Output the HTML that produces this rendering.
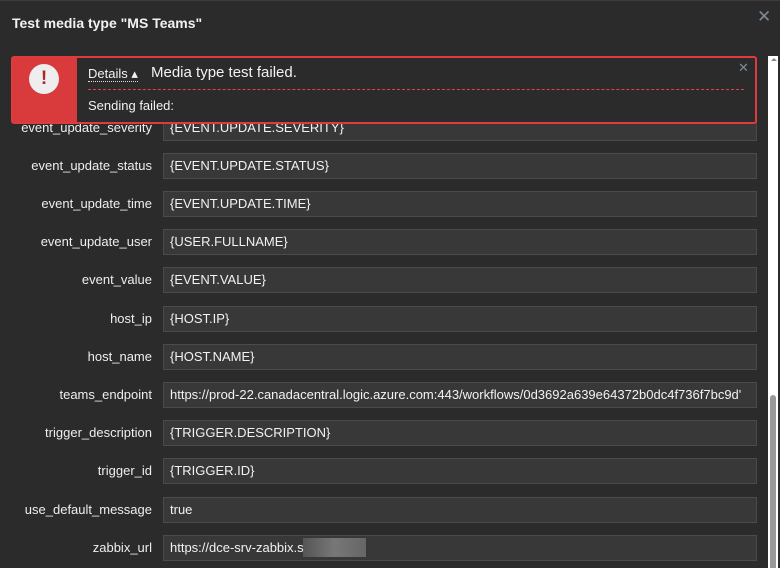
<!DOCTYPE html>
<html><head><style>
body{margin:0;width:780px;height:568px;background:#2b2b2b;font-family:"Liberation Sans",sans-serif;overflow:hidden;position:relative;color:#f2f2f2}
.t{position:absolute;left:12px;top:15px;font-size:14px;font-weight:bold;color:#f2f2f2}
.x{position:absolute;left:757px;top:7px;color:#7f8a94;font-size:17px}
.err{position:absolute;left:11px;top:56px;width:742px;height:64px;border:2px solid #e0393e;border-radius:3px;background:#2b2b2b}
.red{position:absolute;left:0;top:0;width:64px;height:64px;background:#d93a3c}
.circ{position:absolute;width:30px;height:30px;border-radius:50%;background:#eee;color:#b0242a;font-weight:bold;font-size:19px;text-align:center;line-height:30px}
.lbl{position:absolute;right:628px;font-size:13px;color:#eee;text-align:right;white-space:nowrap}
.in{position:absolute;left:163px;width:586px;height:24px;border:1px solid #4b4b4b;background:#383838;font-size:13px;line-height:24px;padding-left:6px;box-sizing:content-box;white-space:nowrap;overflow:hidden;color:#f2f2f2}
</style></head><body>
<div style="position:absolute;left:0;top:0;width:780px;height:1px;background:#3c3c3c"></div>
<div class="t">Test media type "MS Teams"</div>
<div class="x">✕</div>
<div style="position:absolute;left:768px;top:56px;width:10px;height:512px;background:#fff"></div>
<div style="position:absolute;left:770px;top:395px;width:6px;height:173px;background:#999;border-radius:3px 3px 0 0"></div>
<div style="position:absolute;left:771px;top:58px;width:0;height:0;border-left:3px solid transparent;border-right:3px solid transparent;border-bottom:3px solid #888"></div>
<div id="rows"></div>
<div class="err">
<div class="red"><div class="circ" style="left:16px;top:6px">!</div></div>
<div style="position:absolute;left:75px;top:8px;font-size:13px;border-bottom:1px dotted #ddd;line-height:15px">Details ▴</div>
<div style="position:absolute;left:138px;top:6px;font-size:15px">Media type test failed.</div>
<div style="position:absolute;left:75px;top:31px;width:656px;border-top:1px dashed #d9434a"></div>
<div style="position:absolute;left:75px;top:40px;font-size:13px">Sending failed:</div>
<div style="position:absolute;left:725px;top:2px;color:#7f8a94;font-size:13px">✕</div>
</div>
<script>
var r=[["event_update_severity","{EVENT.UPDATE.SEVERITY}"],["event_update_status","{EVENT.UPDATE.STATUS}"],["event_update_time","{EVENT.UPDATE.TIME}"],["event_update_user","{USER.FULLNAME}"],["event_value","{EVENT.VALUE}"],["host_ip","{HOST.IP}"],["host_name","{HOST.NAME}"],["teams_endpoint","https://prod-22.canadacentral.logic.azure.com:443/workflows/0d3692a639e64372b0dc4f736f7bc9d'"],["trigger_description","{TRIGGER.DESCRIPTION}"],["trigger_id","{TRIGGER.ID}"],["use_default_message","true"],["zabbix_url","https://dce-srv-zabbix.s"]];
var h="";r.forEach(function(e,i){var c=127.5+i*38.2;h+='<div class="lbl" style="top:'+(c-8)+'px">'+e[0]+'</div><div class="in" style="top:'+(c-13)+'px">'+e[1]+(i==11?'<span style="position:absolute;left:139px;top:2px;width:63px;height:19px;background:linear-gradient(90deg,#555,#777,#666)"></span>':'')+'</div>';});
document.getElementById("rows").innerHTML=h;
</script>
</body></html>
